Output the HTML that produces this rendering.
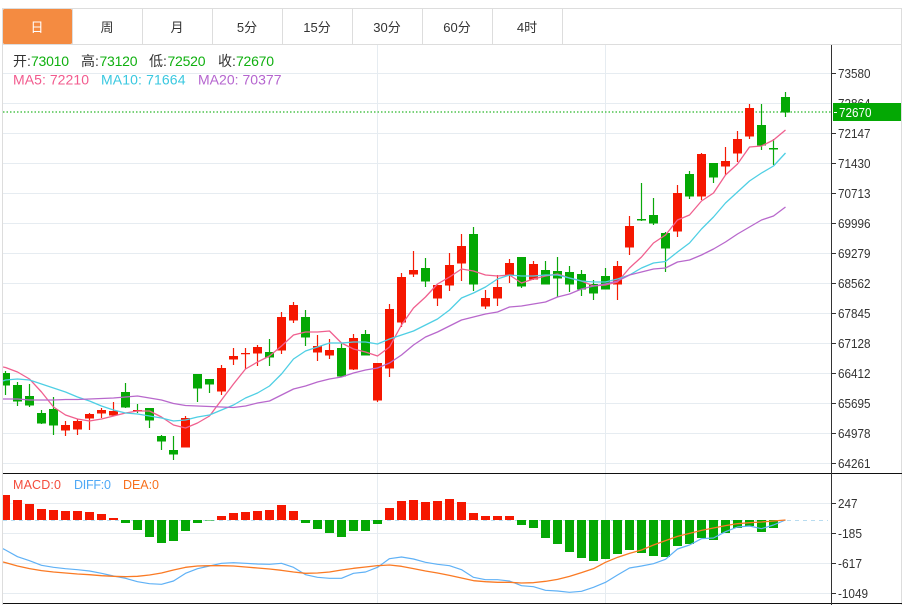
<!DOCTYPE html>
<html><head><meta charset="utf-8"><style>
html,body{margin:0;padding:0;background:#fff;width:908px;height:605px;overflow:hidden}
svg{display:block}
text{font-family:"Liberation Sans","Noto Sans CJK SC",sans-serif}
.m{vector-effect:non-scaling-stroke;fill:none;stroke-linejoin:round}
</style></head><body>
<svg width="908" height="605" viewBox="0 0 908 605" xmlns="http://www.w3.org/2000/svg">
<defs><clipPath id="c"><rect x="3" y="45" width="828" height="560"/></clipPath></defs>
<!-- frame -->
<path d="M2 8.5H901.5M2 44.5H901.5M2.5 8V605M901.5 8V605" stroke="#ddd" fill="none"/>
<path d="M72.5 9V44M142.5 9V44M212.5 9V44M282.5 9V44M352.5 9V44M422.5 9V44M492.5 9V44M562.5 9V44" stroke="#ddd"/>
<rect x="3" y="9" width="69" height="35" rx="1.5" fill="#f48b41"/>
<g font-size="13" fill="#333" text-anchor="middle">
<text x="37" y="32" fill="#fff">日</text><text x="107" y="32">周</text><text x="177" y="32">月</text><text x="247" y="32">5分</text><text x="317" y="32">15分</text><text x="387" y="32">30分</text><text x="457" y="32">60分</text><text x="527" y="32">4时</text>
</g>
<!-- grid -->
<path d="M3 73.5H831M3 103.5H831M3 133.5H831M3 163.5H831M3 193.5H831M3 223.5H831M3 253.5H831M3 283.5H831M3 313.5H831M3 343.5H831M3 373.5H831M3 403.5H831M3 433.5H831M3 463.5H831M3 503.5H831M3 533.5H831M3 563.5H831M3 593.5H831M377.5 45V603M605.5 45V603" stroke="#e6ecf1"/>
<!-- price line -->
<path d="M3 112H831" stroke="#4fc44f" stroke-width="1.4" stroke-dasharray="1.5 2"/>
<g clip-path="url(#c)">
<!-- wicks -->
<path fill="none" stroke="#0aa80a" stroke-width="1.2" d="M5.5 371V395M17.5 382V406M29.5 384V407M41.5 410V424M53.5 397V435M125.5 383V408M137.5 404V413M149.5 408V428M161.5 435V450M173.5 436V460M197.5 374V402M209.5 379V393M269.5 339V366M305.5 310V346M341.5 343V376M365.5 330V355M425.5 258V287M473.5 227V291M521.5 257V288M545.5 261V284M557.5 257V297M569.5 266V292M581.5 270V296M593.5 280V300M605.5 268V289M641.5 183V221M653.5 198V225M665.5 232V272M689.5 171V199M713.5 163V183M761.5 104V150M773.5 139V165M785.5 92V117"/>
<path fill="none" stroke="#f51a03" stroke-width="1.2" d="M65.5 421V436M77.5 419V435M89.5 413V430M101.5 408V418M113.5 402V415M185.5 416V447M221.5 365V395M233.5 348V365M245.5 348V369M257.5 345V366M281.5 312V354M293.5 302V323M317.5 335V361M329.5 339V359M353.5 334V370M377.5 363V402M389.5 304V377M401.5 273V327M413.5 251V277M437.5 285V306M449.5 253V291M461.5 234V281M485.5 290V309M497.5 275V306M509.5 259V283M533.5 261V280M617.5 261V300M629.5 216V255M677.5 185V237M701.5 153V200M725.5 147V175M737.5 131V162M749.5 104V139"/>
<!-- bodies -->
<path fill="none" stroke="#04a804" stroke-width="9" d="M5.5 373V385.5M17.5 385V401.5M29.5 396V405.5M41.5 413V423.5M53.5 409V425.5M125.5 392V407.5M149.5 408V420.5M161.5 436V441.5M173.5 450V454.5M197.5 374V388.5M209.5 379V384.5M269.5 352V357.5M305.5 317V337.5M341.5 348V376.5M365.5 334V355.5M425.5 268V281.5M473.5 234V284.5M521.5 257V286.5M545.5 270V284.5M557.5 271V278.5M569.5 272V284.5M581.5 274V289.5M593.5 284V293.5M605.5 276V289.5M641.5 219V220.5M653.5 215V223.5M665.5 233V248.5M689.5 174V196.5M713.5 163V177.5M761.5 125V145.5M773.5 148V149.5M785.5 97V112.5"/>
<path fill="none" stroke="#f51700" stroke-width="9" d="M65.5 425V430.5M77.5 421V429.5M89.5 414V418.5M101.5 410V413.5M113.5 411V415.5M137.5 410V411.2M185.5 418V447.5M221.5 368V391.5M233.5 356V359.5M245.5 353V354.2M257.5 347V353.5M281.5 317V350.5M293.5 305V320.5M317.5 346V352.5M329.5 350V355.5M353.5 338V369.5M377.5 363V400.5M389.5 309V368.5M401.5 277V322.5M413.5 270V274.5M437.5 285V298.5M449.5 265V285.5M461.5 246V263.5M485.5 298V306.5M497.5 287V298.5M509.5 263V275.5M533.5 264V279.5M617.5 266V284.5M629.5 226V247.5M677.5 193V231.5M701.5 154V196.5M725.5 161V166.5M737.5 139V153.5M749.5 108V136.5"/>
<!-- MA -->
<polyline fill="none" stroke-linejoin="round" stroke="#f0608f" stroke-width="1.3" points="3,367 5.5,367.5 17.5,372 29.5,379 41.5,392 53.5,407 65.5,415 77.5,419 89.5,421 101.5,419 113.5,416 125.5,413 137.5,411 149.5,411 161.5,417 173.5,425 185.5,428 197.5,423 209.5,416 221.5,400 233.5,384 245.5,369 257.5,362 269.5,356 281.5,346 293.5,335 305.5,332 317.5,332 329.5,331 341.5,343 353.5,349 365.5,352 377.5,356 389.5,347 401.5,325 413.5,308 425.5,297 437.5,284 449.5,277 461.5,269 473.5,271 485.5,275 497.5,276 509.5,275 521.5,283 533.5,279 545.5,276 557.5,274 569.5,278 581.5,281 593.5,286 605.5,285 617.5,282 629.5,268 641.5,257 653.5,243 665.5,235 677.5,220 689.5,215 701.5,201 713.5,193 725.5,175 737.5,164 749.5,147 761.5,146 773.5,140 785.5,130"/>
<polyline fill="none" stroke-linejoin="round" stroke="#4fcfe4" stroke-width="1.3" points="3,381 5.5,380 17.5,379 29.5,380 41.5,384 53.5,388 65.5,392 77.5,397 89.5,401 101.5,406 113.5,410 125.5,413 137.5,414 149.5,416 161.5,418 173.5,421 185.5,420 197.5,417 209.5,415 221.5,410 233.5,405 245.5,398 257.5,393 269.5,386 281.5,374 293.5,359 305.5,351 317.5,347 329.5,343 341.5,343 353.5,342 365.5,342 377.5,344 389.5,339 401.5,335 413.5,331 425.5,325 437.5,319 449.5,310 461.5,298 473.5,293 485.5,287 497.5,279 509.5,275 521.5,276 533.5,276 545.5,275 557.5,275 569.5,278 581.5,281 593.5,282 605.5,282 617.5,279 629.5,275 641.5,268 653.5,263 665.5,261.5 677.5,252 689.5,243 701.5,229 713.5,217 725.5,203 737.5,192 749.5,181 761.5,173 773.5,166 785.5,153"/>
<polyline fill="none" stroke-linejoin="round" stroke="#b868cc" stroke-width="1.3" points="3,399 5.5,399 17.5,399 29.5,400 41.5,400 53.5,400 65.5,399.5 77.5,399.5 89.5,399 101.5,398.5 113.5,398 125.5,397 137.5,396 149.5,398 161.5,400 173.5,403.5 185.5,405.5 197.5,406 209.5,406.5 221.5,407 233.5,407.5 245.5,406 257.5,403 269.5,401 281.5,395 293.5,389 305.5,386 317.5,382 329.5,379 341.5,377 353.5,373 365.5,370 377.5,368 389.5,363 401.5,355 413.5,345 425.5,337 437.5,332 449.5,326 461.5,320 473.5,317 485.5,314 497.5,312 509.5,307 521.5,306 533.5,304 545.5,302 557.5,297 569.5,294 581.5,289 593.5,286 605.5,284 617.5,281 629.5,275 641.5,272 653.5,269 665.5,268 677.5,262 689.5,260 701.5,255 713.5,249 725.5,242 737.5,234 749.5,227 761.5,220 773.5,216 785.5,207"/>
<!-- MACD baseline -->
<path d="M3 520.5H828" stroke="#b8dcf0" stroke-dasharray="4 4"/>
<!-- MACD bars -->
<path fill="none" stroke="#f51700" stroke-width="9" d="M5.5 495V520M17.5 500V520M29.5 504V520M41.5 509V520M53.5 510V520M65.5 511V520M77.5 511V520M89.5 512V520M101.5 514V520M113.5 518V520M221.5 516V520M233.5 513V520M245.5 512V520M257.5 511V520M269.5 510V520M281.5 505V520M293.5 511V520M389.5 508V520M401.5 501V520M413.5 500V520M425.5 502V520M437.5 501V520M449.5 499V520M461.5 502V520M473.5 513V520M485.5 516V520M497.5 516V520M509.5 516V520"/>
<path fill="none" stroke="#04a804" stroke-width="9" d="M125.5 520V523M137.5 520V530M149.5 520V537M161.5 520V543M173.5 520V541M185.5 520V531M197.5 520V523M209.5 520V520.5M305.5 520V523M317.5 520V529M329.5 520V533M341.5 520V537M353.5 520V531M365.5 520V531M377.5 520V524M521.5 520V525M533.5 520V528M545.5 520V538M557.5 520V544M569.5 520V552M581.5 520V558M593.5 520V561M605.5 520V559M617.5 520V554M629.5 520V550M641.5 520V553M653.5 520V556M665.5 520V557M677.5 520V546M689.5 520V544M701.5 520V538M713.5 520V540M725.5 520V533M737.5 520V528M749.5 520V526M761.5 520V532M773.5 520V528"/>
<!-- MACD lines -->
<g transform="translate(0 470) scale(1 .33333)">
<polyline class="m" stroke="#5fb1f6" stroke-width="1.2" points="3,236 5.5,240 17.5,260 29.5,272 41.5,286 53.5,292 65.5,296 77.5,299 89.5,303 101.5,310 113.5,318 125.5,325 137.5,335 149.5,341 161.5,343 173.5,333 185.5,310 197.5,296 209.5,288 221.5,280 233.5,278 245.5,280 257.5,282 269.5,283 281.5,280 293.5,292 305.5,314 317.5,322 329.5,325 341.5,325 353.5,310 365.5,306 377.5,292 389.5,266 401.5,261 413.5,267 425.5,277 437.5,283 449.5,287 461.5,299 473.5,322 485.5,329 497.5,329 509.5,333 521.5,347 533.5,350 545.5,361 557.5,363 569.5,367 581.5,364 593.5,352 605.5,337 617.5,315 629.5,294 641.5,288 653.5,281 665.5,268 677.5,237 689.5,225 701.5,206 713.5,204 725.5,185 737.5,171 749.5,168 761.5,176 773.5,165 785.5,150"/>
<polyline class="m" stroke="#fa7a24" stroke-width="1.3" points="3,276 5.5,278 17.5,288 29.5,296 41.5,302 53.5,306 65.5,309 77.5,312 89.5,314 101.5,317 113.5,319 125.5,320 137.5,319 149.5,315 161.5,309 173.5,300 185.5,292 197.5,288 209.5,287 221.5,287 233.5,288 245.5,291 257.5,294 269.5,297 281.5,301 293.5,306 305.5,310 317.5,309 329.5,306 341.5,300 353.5,295 365.5,291 377.5,287 389.5,285 401.5,289 413.5,296 425.5,303 437.5,309 449.5,316 461.5,324 473.5,332 485.5,335 497.5,337 509.5,337 521.5,339 533.5,338 545.5,334 557.5,328 569.5,319 581.5,308 593.5,296 605.5,277 617.5,262 629.5,250 641.5,240 653.5,225 665.5,212 677.5,199 689.5,190 701.5,181 713.5,174 725.5,167 737.5,161 749.5,158 761.5,156 773.5,153 785.5,150"/>
</g>
</g>
<!-- separators and axis -->
<path d="M3 473.5H902M3 603.5H902" stroke="#111"/>
<path d="M831.5 45V605" stroke="#333"/>
<path d="M832 73.5H836M832 133.5H836M832 163.5H836M832 193.5H836M832 223.5H836M832 253.5H836M832 283.5H836M832 313.5H836M832 343.5H836M832 373.5H836M832 403.5H836M832 433.5H836M832 463.5H836M832 503.5H836M832 533.5H836M832 563.5H836M832 593.5H836" stroke="#333"/>
<g font-size="13" fill="#333" lengthAdjust="spacingAndGlyphs">
<text x="838" y="78" textLength="32.5" lengthAdjust="spacingAndGlyphs">73580</text>
<text x="838" y="108" textLength="32.5" lengthAdjust="spacingAndGlyphs">72864</text>
<text x="838" y="138" textLength="32.5" lengthAdjust="spacingAndGlyphs">72147</text>
<text x="838" y="168" textLength="32.5" lengthAdjust="spacingAndGlyphs">71430</text>
<text x="838" y="198" textLength="32.5" lengthAdjust="spacingAndGlyphs">70713</text>
<text x="838" y="228" textLength="32.5" lengthAdjust="spacingAndGlyphs">69996</text>
<text x="838" y="258" textLength="32.5" lengthAdjust="spacingAndGlyphs">69279</text>
<text x="838" y="288" textLength="32.5" lengthAdjust="spacingAndGlyphs">68562</text>
<text x="838" y="318" textLength="32.5" lengthAdjust="spacingAndGlyphs">67845</text>
<text x="838" y="348" textLength="32.5" lengthAdjust="spacingAndGlyphs">67128</text>
<text x="838" y="378" textLength="32.5" lengthAdjust="spacingAndGlyphs">66412</text>
<text x="838" y="408" textLength="32.5" lengthAdjust="spacingAndGlyphs">65695</text>
<text x="838" y="438" textLength="32.5" lengthAdjust="spacingAndGlyphs">64978</text>
<text x="838" y="468" textLength="32.5" lengthAdjust="spacingAndGlyphs">64261</text>
<text x="838" y="508" textLength="19.5" lengthAdjust="spacingAndGlyphs">247</text>
<text x="838" y="538" textLength="24" lengthAdjust="spacingAndGlyphs">-185</text>
<text x="838" y="568" textLength="24" lengthAdjust="spacingAndGlyphs">-617</text>
<text x="838" y="598" textLength="30" lengthAdjust="spacingAndGlyphs">-1049</text>
</g>
<rect x="833" y="103" width="68" height="18" fill="#04a804"/>
<path d="M834 112.5H837" stroke="#fff"/>
<text x="839" y="117" font-size="13" fill="#fff" textLength="32.5" lengthAdjust="spacingAndGlyphs">72670</text>
<!-- legend -->
<g font-size="14" fill="#333">
<text x="13" y="66">开:</text><text x="81" y="66">高:</text><text x="149" y="66">低:</text><text x="218" y="66">收:</text>
</g>
<g font-size="14" fill="#10b010">
<text x="31" y="66" textLength="38">73010</text><text x="99.5" y="66" textLength="38">73120</text><text x="167.5" y="66" textLength="38">72520</text><text x="236" y="66" textLength="38">72670</text>
</g>
<g font-size="14">
<text x="13" y="84.5" fill="#f25b8e" textLength="76">MA5: 72210</text>
<text x="101" y="84.5" fill="#3ac8e0" textLength="84.5">MA10: 71664</text>
<text x="198" y="84.5" fill="#b565cf" textLength="83.5">MA20: 70377</text>
</g>
<g font-size="12.5">
<text x="13" y="489" fill="#f44c3c" textLength="48">MACD:0</text>
<text x="74" y="489" fill="#4ea8f5" textLength="37">DIFF:0</text>
<text x="123" y="489" fill="#f8701c" textLength="36">DEA:0</text>
</g>
</svg>
</body></html>
